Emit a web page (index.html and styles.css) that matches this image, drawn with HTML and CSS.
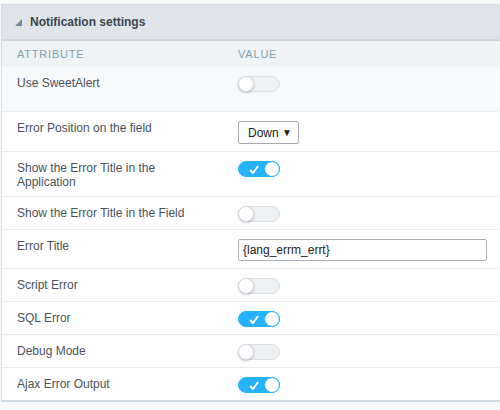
FILE: index.html
```html
<!DOCTYPE html>
<html>
<head>
<meta charset="utf-8">
<link rel="stylesheet" href="styles.css">
</head>
<body>
<div class="panel">
  <div class="panel-head">
    <svg class="caret" width="7" height="7" viewBox="0 0 7 7"><polygon points="7,0 7,7 0,7" fill="#7d8893"/></svg>
    <span class="title">Notification settings</span>
  </div>
  <div class="row colhead">
    <div class="c1">ATTRIBUTE</div>
    <div class="c2">VALUE</div>
  </div>
  <div class="row first">
    <div class="c1">Use SweetAlert</div>
    <div class="c2"><span class="tg"><span class="knob"></span></span></div>
  </div>
  <div class="row">
    <div class="c1">Error Position on the field</div>
    <div class="c2"><span class="sel"><span>Down</span><span class="arr">&#9660;</span></span></div>
  </div>
  <div class="row">
    <div class="c1">Show the Error Title in the Application</div>
    <div class="c2"><span class="tg on"><svg class="chk" width="10" height="9" viewBox="0 0 10 9"><polyline points="1,5 4,8 9,1" fill="none" stroke="#fff" stroke-width="2"/></svg><span class="knob"></span></span></div>
  </div>
  <div class="row">
    <div class="c1">Show the Error Title in the Field</div>
    <div class="c2"><span class="tg"><span class="knob"></span></span></div>
  </div>
  <div class="row">
    <div class="c1">Error Title</div>
    <div class="c2"><span class="inp">{lang_errm_errt}</span></div>
  </div>
  <div class="row">
    <div class="c1">Script Error</div>
    <div class="c2"><span class="tg"><span class="knob"></span></span></div>
  </div>
  <div class="row">
    <div class="c1">SQL Error</div>
    <div class="c2"><span class="tg on"><svg class="chk" width="10" height="9" viewBox="0 0 10 9"><polyline points="1,5 4,8 9,1" fill="none" stroke="#fff" stroke-width="2"/></svg><span class="knob"></span></span></div>
  </div>
  <div class="row">
    <div class="c1">Debug Mode</div>
    <div class="c2"><span class="tg"><span class="knob"></span></span></div>
  </div>
  <div class="row last">
    <div class="c1">Ajax Error Output</div>
    <div class="c2"><span class="tg on"><svg class="chk" width="10" height="9" viewBox="0 0 10 9"><polyline points="1,5 4,8 9,1" fill="none" stroke="#fff" stroke-width="2"/></svg><span class="knob"></span></span></div>
  </div>
</div>
</body>
</html>
```

FILE: styles.css
```css
html, body {
  margin: 0;
  padding: 0;
  background: #f7f9fb;
  font-family: "Liberation Sans", Arial, sans-serif;
  font-size: 12px;
  color: #4a525b;
}
.panel {
  margin: 4px 0 0 1px;
  border-top: 1px solid #d3dbe2;
  border-left: 1px solid #d6dde3;
  border-bottom: 2px solid #d3dce3;
  background: #fff;
}
.panel-head {
  height: 34px;
  background: #dfe5eb;
  border-bottom: 2px solid #cfd8df;
  display: flex;
  align-items: center;
  padding-left: 13px;
  gap: 8px;
}
.caret { display: block; margin-top: 1px; }
.title {
  font-weight: bold;
  font-size: 12px;
  color: #3a4651;
}
.row {
  display: flex;
  padding: 9px 0 7px 0;
  border-bottom: 1px solid #e9edf1;
  line-height: 14px;
}
.row.colhead {
  background: #eff3f6;
  padding: 0;
  height: 26px;
  align-items: center;
  border-bottom: none;
  font-size: 11px;
  letter-spacing: 0.8px;
  color: #7f9fb0;
}
.row.first {
  background: #f8f9fb;
  padding-bottom: 19px;
}
.row.last { border-bottom: none; }
.c1 {
  width: 191px;
  padding: 0 30px 0 15px;
  flex: none;
}
.c2 {
  flex: 1;
  display: flex;
  align-items: flex-start;
}
.tg {
  position: relative;
  display: block;
  width: 40px;
  height: 14px;
  border: 1px solid #d9dfe5;
  border-radius: 9px;
  background: #eef1f4;
}
.tg .knob {
  position: absolute;
  left: -1px;
  top: -1px;
  width: 14px;
  height: 14px;
  border-radius: 50%;
  background: #fff;
  border: 1px solid #d6dce2;
  box-shadow: 0 1px 2px rgba(0,0,0,0.22);
}
.tg.on {
  background: #24b3fb;
  border-color: #24b3fb;
}
.tg.on .knob {
  left: auto;
  right: -1px;
  border-color: #24b3fb;
  box-shadow: none;
}
.tg .chk {
  position: absolute;
  left: 10px;
  top: 3px;
  display: block;
}
.sel {
  display: flex;
  justify-content: space-between;
  align-items: center;
  box-sizing: border-box;
  width: 61px;
  height: 23px;
  border: 1px solid #a4abb3;
  border-radius: 2px;
  padding: 0 6px 0 9px;
  color: #222;
  font-size: 12px;
  background: #fff;
}
.sel .arr { font-size: 10px; color: #222; }
.inp {
  display: flex;
  align-items: center;
  box-sizing: border-box;
  width: 249px;
  height: 22px;
  border: 1px solid #a9b0b8;
  border-radius: 2px;
  padding-left: 4px;
  color: #222;
  background: #fff;
}
```
